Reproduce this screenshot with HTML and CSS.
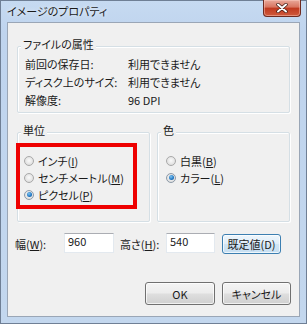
FILE: index.html
```html
<!DOCTYPE html>
<html lang="ja">
<head>
<meta charset="utf-8">
<title>イメージのプロパティ</title>
<link rel="stylesheet" href="styles.css">
</head>
<body>
<div class="window">
  <div class="titlebar">
    <span class="title">イメージのプロパティ</span>
    <div class="close">
      <svg width="14" height="10" viewBox="0 0 14 10"><path d="M3 1.5 L11 8.5 M11 1.5 L3 8.5" stroke="#3a1810" stroke-width="3.4" stroke-linecap="round"/><path d="M3 1.5 L11 8.5 M11 1.5 L3 8.5" stroke="#ffffff" stroke-width="2" stroke-linecap="round"/></svg>
    </div>
  </div>
  <div class="client">
    <div class="group attrs">
      <span class="legend">ファイルの属性</span>
      <div class="attr-grid">
        <span>前回の保存日:</span><span>利用できません</span>
        <span>ディスク上のサイズ:</span><span>利用できません</span>
        <span>解像度:</span><span>96 DPI</span>
      </div>
    </div>
    <div class="groups-row">
      <div class="group unit">
        <span class="legend">単位</span>
        <div class="radio-list highlight">
          <div class="radio-row"><span class="radio"></span><span>インチ(<u>I</u>)</span></div>
          <div class="radio-row"><span class="radio"></span><span>センチメートル(<u>M</u>)</span></div>
          <div class="radio-row"><span class="radio checked"></span><span>ピクセル(<u>P</u>)</span></div>
        </div>
      </div>
      <div class="group color">
        <span class="legend">色</span>
        <div class="radio-list plain">
          <div class="radio-row"><span class="radio"></span><span>白黒(<u>B</u>)</span></div>
          <div class="radio-row"><span class="radio checked"></span><span>カラー(<u>L</u>)</span></div>
        </div>
      </div>
    </div>
    <div class="size-row">
      <span class="lbl w-lbl">幅(<u>W</u>):</span>
      <div class="input w-in">960</div>
      <span class="lbl h-lbl">高さ(<u>H</u>):</span>
      <div class="input h-in">540</div>
      <div class="btn default-btn">既定値(D)</div>
    </div>
    <div class="actions">
      <div class="btn ok">OK</div>
      <div class="btn cancel">キャンセル</div>
    </div>
  </div>
</div>
</body>
</html>
```

FILE: styles.css
```css
* { box-sizing: border-box; }
html, body { margin: 0; padding: 0; }
body {
  width: 307px;
  height: 324px;
  overflow: hidden;
  font-family: "Noto Sans CJK JP", "Noto Sans", sans-serif;
  font-size: 11px;
  line-height: 16px;
  color: #1a1a1a;
  font-feature-settings: "palt";
}
u { text-decoration: underline; text-underline-offset: 1px; }

.window {
  width: 307px;
  height: 324px;
  border: 1px solid #6f7f95;
  background: linear-gradient(#c6daf1 0%, #bfd4ee 10%, #c3d7ee 100%);
  padding: 0 6px 6px 6px;
  display: flex;
  flex-direction: column;
}

.titlebar {
  height: 21px;
  display: flex;
  align-items: flex-start;
  justify-content: space-between;
}
.title {
  margin-top: 3px;
  line-height: 15px;
  font-size: 11px;
  color: #1b1b1b;
  text-shadow: 0 0 4px rgba(255,255,255,0.9);
}
.close {
  width: 38px;
  height: 17px;
  margin-top: -1px;
  margin-right: -1px;
  border: 1px solid #6e2a20;
  border-top: none;
  border-radius: 0 0 4px 4px;
  background: linear-gradient(#e9a99a 0%, #d8745f 45%, #c0391f 50%, #cf5a3c 100%);
  display: flex;
  align-items: center;
  justify-content: center;
  box-shadow: inset 0 0 0 1px rgba(255,210,200,0.45);
}

.client {
  flex: 1;
  border: 1px solid #9aa6b6;
  background: #f0f0f0;
  display: flex;
  flex-direction: column;
}

.group {
  border: 1px solid #d5dfe5;
  box-shadow: inset 1px 1px 0 #ffffff, 1px 1px 0 #ffffff;
  border-radius: 2px;
}
.legend {
  display: block;
  width: fit-content;
  background: #f0f0f0;
  line-height: 14px;
  height: 14px;
  padding: 0 2px;
  margin: -10px 0 0 3px;
}

.attrs {
  margin: 23px 9px 0 9px;
  height: 67px;
}
.attr-grid {
  display: grid;
  grid-template-columns: 103px 1fr;
  grid-auto-rows: 18px;
  align-items: center;
  padding: 4px 0 0 7px;
}

.groups-row {
  display: flex;
  gap: 7px;
  margin: 19px 9px 0 9px;
}
.unit, .color {
  width: 133px;
  height: 90px;
}

.radio-list { display: flex; flex-direction: column; }
.radio-row {
  display: flex;
  align-items: center;
  height: 17px;
  gap: 4px;
}
.highlight {
  width: 121px;
  height: 66px;
  margin: 6px 0 0 -2px;
  border: 4px solid #ee0000;
  padding: 5px 0 0 4px;
}
.plain {
  margin: 15px 0 0 8px;
}

.radio {
  width: 10px;
  height: 10px;
  border-radius: 50%;
  border: 1px solid #a9a9a9;
  background: radial-gradient(circle at 50% 45%, #fafafa 0%, #e6e6e6 55%, #d2d2d2 100%);
  flex: none;
  display: flex;
  align-items: center;
  justify-content: center;
}
.radio.checked { border-color: #8d9aa8; }
.radio.checked::after {
  content: "";
  width: 5px;
  height: 5px;
  border-radius: 50%;
  background: radial-gradient(circle at 40% 35%, #7fc4f2 0%, #1f76c2 60%, #15508e 100%);
}

.size-row {
  display: flex;
  align-items: center;
  margin: 11px 0 0 7px;
  height: 21px;
}
.lbl { line-height: 16px; }
.w-lbl { width: 49px; }
.h-lbl { width: 46px; margin-left: 6px; }
.input {
  height: 20px;
  background: #ffffff;
  border: 1px solid #e3e9ef;
  border-top-color: #abadb3;
  padding: 0 3px;
  line-height: 15px;
  align-self: flex-start;
}
.w-in { width: 50px; }
.h-in { width: 49px; }

.btn {
  display: flex;
  align-items: center;
  justify-content: center;
  border-radius: 3px;
  border: 1px solid #707070;
  background: linear-gradient(#f4f4f4 0%, #ececec 48%, #dedede 52%, #d0d0d0 100%);
  box-shadow: inset 0 0 0 1px rgba(255,255,255,0.7);
  color: #1a1a1a;
}
.default-btn {
  width: 59px;
  height: 20px;
  margin-left: 7px;
  border-color: #3c7fb1;
  background: linear-gradient(#eef6fc 0%, #e0eef9 48%, #d0e5f5 52%, #c6dff2 100%);
}

.actions {
  display: flex;
  justify-content: flex-end;
  gap: 7px;
  margin: 28px 8px 0 0;
}
.ok { width: 70px; height: 23px; }
.cancel { width: 69px; height: 23px; }
```
